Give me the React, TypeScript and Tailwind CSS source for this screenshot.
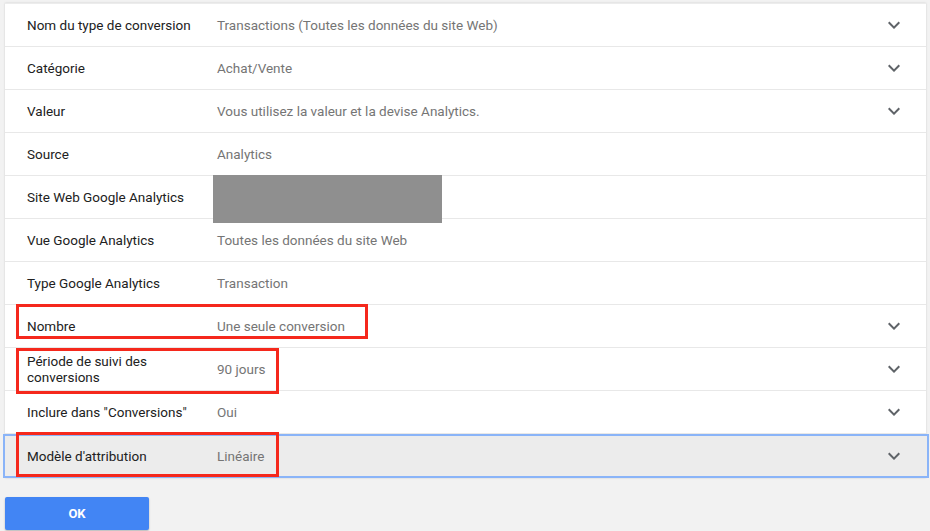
import React from "react";

const rows: { label: string; value: string; chevron: boolean }[] = [
  { label: "Nom du type de conversion", value: "Transactions (Toutes les données du site Web)", chevron: true },
  { label: "Catégorie", value: "Achat/Vente", chevron: true },
  { label: "Valeur", value: "Vous utilisez la valeur et la devise Analytics.", chevron: true },
  { label: "Source", value: "Analytics", chevron: false },
  { label: "Site Web Google Analytics", value: "", chevron: false },
  { label: "Vue Google Analytics", value: "Toutes les données du site Web", chevron: false },
  { label: "Type Google Analytics", value: "Transaction", chevron: false },
  { label: "Nombre", value: "Une seule conversion", chevron: true },
  { label: "Période de suivi des conversions", value: "90 jours", chevron: true },
  { label: "Inclure dans \"Conversions\"", value: "Oui", chevron: true },
  { label: "Modèle d'attribution", value: "Linéaire", chevron: true },
];

function Chevron() {
  return (
    <svg width="24" height="24" viewBox="0 0 24 24" className="text-[#5f6368]">
      <path d="M7.41 8.59L12 13.17l4.59-4.58L18 10l-6 6-6-6 1.41-1.41z" fill="currentColor" />
    </svg>
  );
}

export default function App() {
  return (
    <div
      className="relative w-[930px] h-[531px] bg-[#f2f2f2] overflow-hidden"
      style={{ fontFamily: "Roboto, 'Liberation Sans', sans-serif" }}
    >
      <div className="pt-[3px] pl-[5px] pr-[4px]">
        <div className="bg-white border-t border-[#ececec] shadow-[0_0_2px_rgba(0,0,0,0.15)]">
          {rows.map((r, i) => {
            const selected = i === rows.length - 1;
            return (
              <div
                key={i}
                className={
                  selected
                    ? "relative -ml-[2px] -mr-[3px] h-[44px] flex items-center bg-[#ececec] border-2 border-[#8ab4f8]"
                    : "h-[43px] flex items-center border-b border-[#e8e8e8]"
                }
              >
                <div className="pl-[22px] w-[212px] shrink-0 pr-[20px] text-[13.5px] leading-[16px] text-[#212121]">
                  {r.label}
                </div>
                <div className="flex-1 text-[13.5px] text-[#757575]">{r.value}</div>
                {r.chevron && (
                  <div className={selected ? "mr-[21px] flex items-center" : "mr-[20px] flex items-center"}>
                    <Chevron />
                  </div>
                )}
              </div>
            );
          })}
        </div>
      </div>

      {/* redacted box */}
      <div className="absolute left-[213px] top-[175px] w-[229px] h-[48px] bg-[#8f8f8f]" />

      {/* red highlight boxes */}
      <div className="absolute left-[16px] top-[304px] w-[352px] h-[35px] border-[3px] border-[#f5281c]" />
      <div className="absolute left-[16px] top-[348px] w-[263px] h-[46px] border-[3px] border-[#f5281c]" />
      <div className="absolute left-[16px] top-[432px] w-[263px] h-[45px] border-[3px] border-[#f5281c]" />

      <div className="pt-[19px] pl-[5px]">
        <button className="w-[144px] h-[33px] bg-[#4285f4] text-white text-[13px] font-bold rounded-[2px] shadow-[0_1px_2px_rgba(0,0,0,0.25)]">
          OK
        </button>
      </div>
    </div>
  );
}
